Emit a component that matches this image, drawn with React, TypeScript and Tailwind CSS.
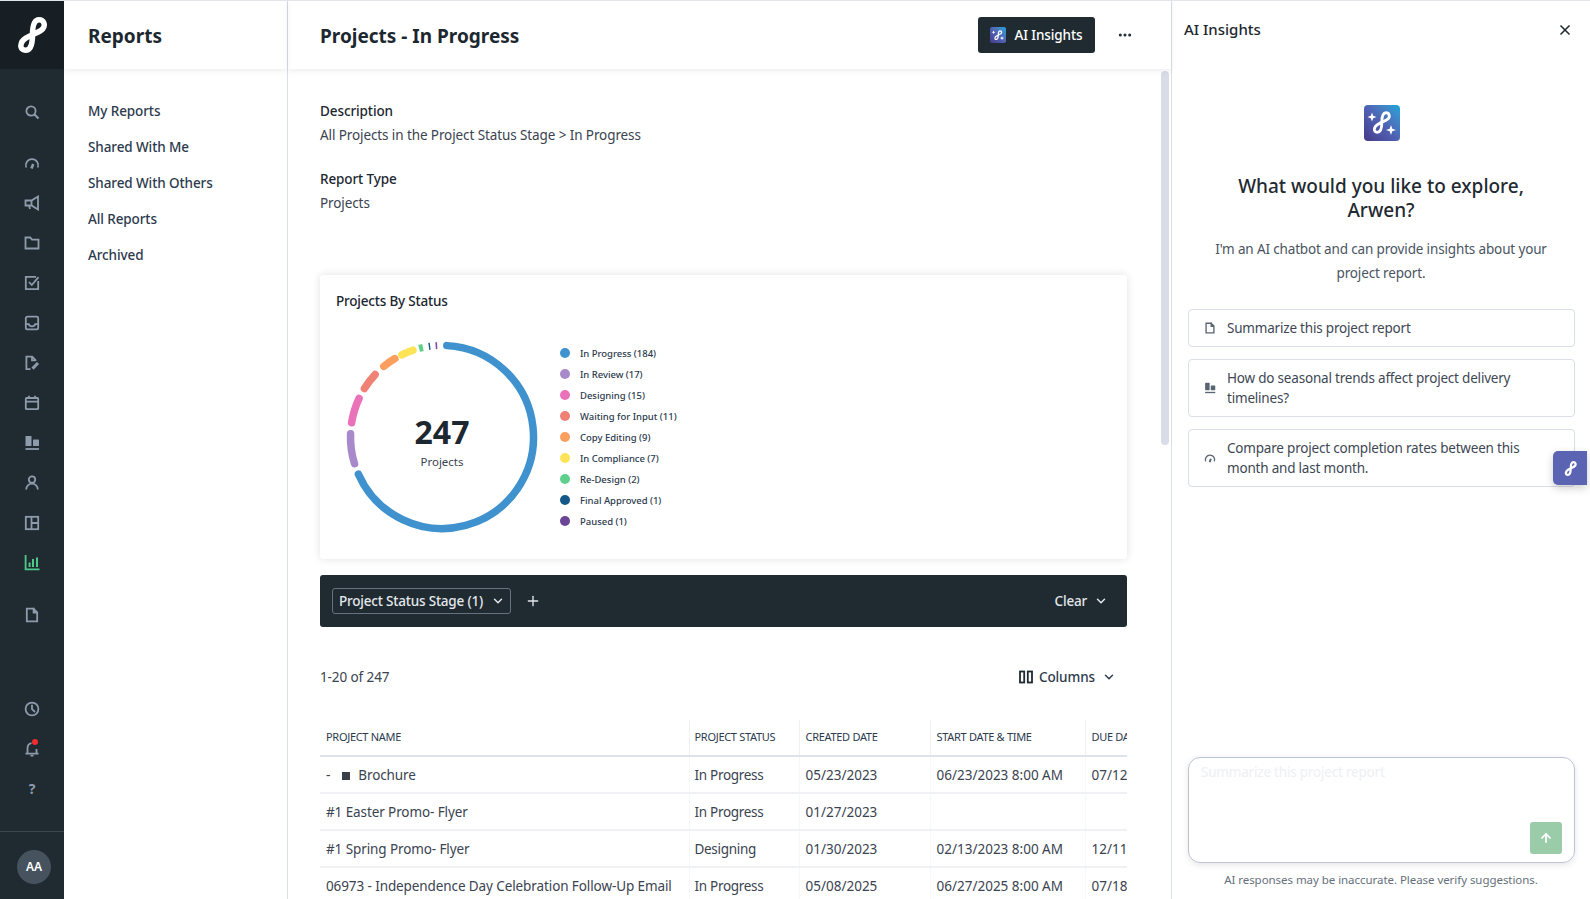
import React from "react";
import { ChevronDown, Plus, X, ArrowUp, Ellipsis } from "lucide-react";

const S = ({ children, className = "" }: { children: React.ReactNode; className?: string }) => (
  <svg viewBox="0 0 16 16" fill="none" stroke="currentColor" strokeWidth="1.8" className={className}>
    {children}
  </svg>
);

const I = {
  search: <><circle cx="7" cy="7" r="4.6" /><path d="M10.5 10.5 14.5 14.5" strokeWidth="2.2" /></>,
  gauge: <><path d="M2.2 12.5A6.2 6.2 0 1 1 13.800 12.5" /><path d="M7.5 13.5 9.200 9" strokeWidth="2.6" /></>,
  mega: <><path d="M14 1.5V14.5L7.5 10.5H1.5V5.5H7.5Z" /><path d="M5 10.5 6 14" /><path d="M7.5 5.5V10.5" /></>,
  folder: <path d="M1.5 2.5H6.2L8 4.6H14.5V13.5H1.5Z" />,
  check: <><path d="M14.2 6V14.2H1.8V1.8H12" /><path d="M5 7 7.8 10 14.5 2.2" /></>,
  inbox: <><rect x="1.8" y="1.6" width="12.4" height="12.8" rx="1.6" /><path d="M2 9.2H4.8A3.3 2.8 0 0 0 11.2 9.2H14" /></>,
  edit: <><path d="M6.5 14.2H2.4V1.6H8.2L11.5 5V6" /><path d="M8 1.6V5.4H11.5" /><path d="M8.5 13.6 14 8" strokeWidth="3" /></>,
  cal: <><rect x="1.8" y="3" width="12.4" height="11.2" rx="0.8" /><path d="M2 6.6H14M5 .8V3.6M11 .8V3.6" /></>,
  bars: <><rect x="1.5" y="1" width="6" height="10" fill="currentColor" stroke="none" rx=".6" /><rect x="9" y="4.6" width="6" height="6.4" fill="currentColor" stroke="none" rx=".6" /><path d="M1.5 14H15" /></>,
  user: <><circle cx="8" cy="4.6" r="3.2" /><path d="M2.2 14.5A5.8 5.8 0 0 1 13.8 14.5" /></>,
  table: <><rect x="1.8" y="1.8" width="12.4" height="12.4" /><path d="M7.5 2V14M7.5 8H14" /></>,
  chart: <><path d="M1.6 0V14.3H15.5" /><path d="M5.6 7.5V12M9 4V12M13 2.5V12" strokeWidth="2" /></>,
  file: <><path d="M2.8 1.6H9.4L13.2 5.4V14.4H2.8Z" /><path d="M9 1.6H9.6V5.6H13" fill="currentColor" strokeWidth="1.8" /></>,
  clock: <><circle cx="8" cy="8" r="6.4" /><path d="M8 3.8V8.2L11 11" /></>,
  bell: <><path d="M3.5 12.5V7.5C3.5 4.5 5 2.6 7.5 2.2M12.5 8V12.5M1.5 12.7H14.5" /><path d="M6.5 14.6H9.5" /></>,
};

const NavIcon = ({ children, active }: { children: React.ReactNode; active?: boolean }) => (
  <div className={"flex h-[40px] items-center justify-center " + (active ? "text-[#4fc98a]" : "text-[#8e9bab]")}>
    <S className="h-[16px] w-[16px]">{children}</S>
  </div>
);

const Infinity8 = ({ className = "", sw = 5 }: { className?: string; sw?: number }) => (
  <svg viewBox="0 0 30 36" fill="none" stroke="currentColor" strokeWidth={sw} className={className}>
    <path d="M15.500 18C15.500 10 17 2.750 22 2.750C27 2.750 28.500 8 26 11.500C23 15.500 16 16.500 9 21C3 24.500 1.500 33.250 8.500 33.250C14 33.250 15.500 25 15.500 18Z" />
  </svg>
);

const AiLogo = ({ box }: { box: string }) => (
  <div className={"relative flex items-center justify-center bg-gradient-to-bl from-[#07a6da] via-[#4f62b4] to-[#463a8a] text-white " + box}>
    <Infinity8 className="h-[64%] w-[64%]" sw={4.5} />
    <svg viewBox="0 0 36 36" className="absolute inset-0 h-full w-full" fill="currentColor">
      <path d="M8 7.500 9.200 10.800 12.500 12 9.200 13.200 8 16.500 6.800 13.200 3.500 12 6.800 10.800Z" />
      <path d="M27 20 28.300 23.700 32 25 28.300 26.300 27 30 25.700 26.300 22 25 25.700 23.700Z" />
    </svg>
  </div>
);

const polar = (a: number, r = 91.5) => {
  const t = ((a - 90) * Math.PI) / 180;
  return [100 + r * Math.cos(t), 100 + r * Math.sin(t)];
};
const arc = (a: number, b: number) => {
  const [x1, y1] = polar(a);
  const [x2, y2] = polar(b);
  return `M${x1} ${y1}A91.500 91.500 0 ${b - a > 180 ? 1 : 0} 1 ${x2} ${y2}`;
};

const segments: [number, number, string, number, "round" | "butt"][] = [
  [3, 246, "#3f92cd", 7.500, "round"],
  [253, 272, "#a88aca", 7.500, "round"],
  [279, 295, "#ea72b8", 7.500, "round"],
  [302, 313, "#ef8275", 7.500, "round"],
  [320.500, 329, "#fb9f5f", 7.500, "round"],
  [334, 341.500, "#fde356", 7.500, "round"],
  [345.500, 348, "#5fd08c", 7, "butt"],
  [351.700, 352.600, "#1d5a8c", 7, "butt"],
  [356, 357, "#7b4f9e", 7, "butt"],
];

const legend: [string, string][] = [
  ["#3f92cd", "In Progress (184)"],
  ["#a88aca", "In Review (17)"],
  ["#ea72b8", "Designing (15)"],
  ["#ef8275", "Waiting for Input (11)"],
  ["#fb9f5f", "Copy Editing (9)"],
  ["#fde356", "In Compliance (7)"],
  ["#5fd08c", "Re-Design (2)"],
  ["#14588a", "Final Approved (1)"],
  ["#6b4596", "Paused (1)"],
];

const rows: [React.ReactNode, string, string, string, string][] = [
  [<span className="flex items-center"><span>-</span><span className="ml-[12px] mr-[7px] h-[8px] w-[8px] bg-[#3a3d4a]" /><span className="ml-[1px]">Brochure</span></span>, "In Progress", "05/23/2023", "06/23/2023 8:00 AM", "07/12/2023"],
  ["#1 Easter Promo- Flyer", "In Progress", "01/27/2023", "", ""],
  ["#1 Spring Promo- Flyer", "Designing", "01/30/2023", "02/13/2023 8:00 AM", "12/11/2023"],
  ["06973 - Independence Day Celebration Follow-Up Email", "In Progress", "05/08/2025", "06/27/2025 8:00 AM", "07/18/2025"],
];

const cellClass = [
  "overflow-hidden whitespace-nowrap pl-[6px] pt-[2px]",
  "overflow-hidden whitespace-nowrap border-l border-[#f6f7f9] pl-[5px] pt-[2px] tracking-[-0.3px]",
  "overflow-hidden whitespace-nowrap border-l border-[#f6f7f9] pl-[6px] pt-[2px] tracking-normal",
  "overflow-hidden whitespace-nowrap border-l border-[#f6f7f9] pl-[6px] pt-[2px] tracking-normal",
  "overflow-hidden whitespace-nowrap border-l border-[#f6f7f9] pl-[6px] pt-[2px] tracking-normal",
];

const headClass = [
  "overflow-hidden whitespace-nowrap pl-[6px] font-normal tracking-[-0.3px]",
  "overflow-hidden whitespace-nowrap border-l border-[#f0f1f4] pl-[5px] font-normal tracking-[-0.3px]",
  "overflow-hidden whitespace-nowrap border-l border-[#f0f1f4] pl-[6px] font-normal tracking-[-0.3px]",
  "overflow-hidden whitespace-nowrap border-l border-[#f0f1f4] pl-[6px] font-normal tracking-[-0.3px]",
  "overflow-hidden whitespace-nowrap border-l border-[#f0f1f4] pl-[6px] font-normal tracking-[-0.3px]",
];

const Prompt = ({ icon, children }: { icon: React.ReactNode; children: React.ReactNode }) => (
  <div className="flex items-center rounded-[4px] border border-[#d9dee8] py-[8px] pl-[15px] pr-[20px] text-[13.5px] leading-[20px] tracking-[-0.2px] text-[#3d4754]">
    <S className="mr-[11px] h-[12px] w-[12px] shrink-0 text-[#5a6573]">{icon}</S>
    <span>{children}</span>
  </div>
);

export default function App() {
  return (
    <div className="flex h-[899px] w-[1590px] overflow-hidden border-t border-[#e2e5ea] bg-white font-['Noto_Sans',sans-serif]">
      {/* rail */}
      <aside className="flex w-[64px] shrink-0 flex-col bg-[#1f2a31]">
        <div className="flex h-[68px] shrink-0 items-center justify-center bg-[#171f24] text-white">
          <Infinity8 className="h-[36px] w-[30px]" sw={5.5} />
        </div>
        <div className="mt-[23px]"><NavIcon>{I.search}</NavIcon></div>
        <div className="mt-[11px] flex flex-col">
          <NavIcon>{I.gauge}</NavIcon>
          <NavIcon>{I.mega}</NavIcon>
          <NavIcon>{I.folder}</NavIcon>
          <NavIcon>{I.check}</NavIcon>
          <NavIcon>{I.inbox}</NavIcon>
          <NavIcon>{I.edit}</NavIcon>
          <NavIcon>{I.cal}</NavIcon>
          <NavIcon>{I.bars}</NavIcon>
          <NavIcon>{I.user}</NavIcon>
          <NavIcon>{I.table}</NavIcon>
          <NavIcon active>{I.chart}</NavIcon>
        </div>
        <div className="mt-[12px]"><NavIcon>{I.file}</NavIcon></div>
        <div className="mt-auto flex flex-col">
          <NavIcon>{I.clock}</NavIcon>
          <div className="relative flex h-[40px] items-center justify-center text-[#8e9bab]">
            <S className="h-[16px] w-[16px]">{I.bell}</S>
            <span className="absolute left-[32px] top-[10px] h-[6px] w-[6px] rounded-full bg-[#f02d2d]" />
          </div>
          <div className="flex h-[39px] items-center justify-center text-[14px] font-bold text-[#8e9bab]">?</div>
        </div>
        <div className="mt-[23px] flex h-[68px] shrink-0 items-start justify-center border-t border-[#3a4650] pt-[18px]">
          <div className="ml-[4px] flex h-[34px] w-[34px] items-center justify-center rounded-full bg-[#46525e] text-[12px] font-semibold text-white">AA</div>
        </div>
      </aside>

      {/* reports nav */}
      <nav className="flex w-[224px] shrink-0 flex-col border-r border-[#d9dee8]">
        <div className="flex h-[68px] shrink-0 items-center pl-[24px] pt-[3px] text-[19px] font-bold text-[#1c2730] shadow-[0_2px_6px_rgba(0,0,0,0.07)]">Reports</div>
        <ul className="mt-[24px] flex flex-col pl-[24px] text-[13.5px] font-medium leading-[36px] tracking-[-0.1px] text-[#2c3a4d]">
          <li>My Reports</li>
          <li>Shared With Me</li>
          <li>Shared With Others</li>
          <li>All Reports</li>
          <li>Archived</li>
        </ul>
      </nav>

      {/* main */}
      <main className="flex w-[884px] shrink-0 flex-col border-r border-[#d9dee8]">
        <header className="relative z-10 flex h-[68px] shrink-0 items-center pl-[32px] shadow-[0_2px_6px_rgba(0,0,0,0.07)]">
          <h1 className="pt-[3px] text-[19px] font-bold text-[#1c2730]">Projects - In Progress</h1>
          <button className="ml-auto flex h-[36px] w-[117px] items-center justify-center gap-[8px] rounded-[3px] bg-[#1f2a31] text-[13.5px] font-medium tracking-[-0.1px] text-white">
            <AiLogo box="h-[16px] w-[16px] rounded-[2px]" />
            AI Insights
          </button>
          <Ellipsis className="ml-[22px] mr-[38px] h-[16px] w-[16px] text-[#1f2a31]" strokeWidth={2.5} />
        </header>
        <div className="flex min-h-0 flex-1">
          <div className="w-[839px] shrink-0 pl-[32px] pt-[30px]">
            <div className="text-[13.5px] leading-[24px] tracking-[-0.1px] text-[#3a4350]">
              <div className="font-medium text-[#1c2730]">Description</div>
              <div>All Projects in the Project Status Stage &gt; In Progress</div>
              <div className="mt-[20px] font-medium text-[#1c2730]">Report Type</div>
              <div>Projects</div>
            </div>
            <section className="mt-[60px] h-[284px] rounded-[3px] bg-white pl-[16px] pt-[15px] shadow-[0_0_8px_rgba(0,0,0,0.12)]">
              <h2 className="text-[13.5px] font-medium leading-[22px] tracking-[-0.2px] text-[#1c2730]">Projects By Status</h2>
              <div className="mt-[25px] flex">
                <div className="relative ml-[6px] h-[200px] w-[200px] shrink-0">
                  <svg viewBox="0 0 200 200" className="h-full w-full" fill="none">
                    {segments.map(([a, b, c, w, cap]) => (
                      <path key={a} d={arc(a, b)} stroke={c} strokeWidth={w} strokeLinecap={cap} />
                    ))}
                  </svg>
                  <div className="absolute inset-0 flex flex-col items-center justify-center">
                    <div className="mt-[8px] text-[32px] font-bold leading-[40px] text-[#1c2730]">247</div>
                    <div className="mt-[1px] text-[11.5px] leading-[18px] text-[#3a4350]">Projects</div>
                  </div>
                </div>
                <ul className="ml-[18px] mt-[5px] flex flex-col">
                  {legend.map(([c, t]) => (
                    <li key={t} className="flex h-[21px] items-center text-[9.5px] font-medium tracking-[-0.02px] text-[#2c3a4d]">
                      <span className="mr-[10px] h-[10px] w-[10px] rounded-full" style={{ background: c }} />
                      <span className="pt-[4px]">{t}</span>
                    </li>
                  ))}
                </ul>
              </div>
            </section>
            <div className="mt-[16px] flex h-[52px] items-center rounded-[3px] bg-[#1f2a31] pl-[12px] pr-[19px] text-[13.5px] font-medium tracking-[-0.2px] text-[#e4e8ec]">
              <div className="flex h-[26px] items-center rounded-[3px] border border-[#66737e] pl-[6px] pr-[5px]">
                Project Status Stage (1)
                <ChevronDown className="ml-[8px] h-[14px] w-[14px]" strokeWidth={2.5} />
              </div>
              <Plus className="ml-[14px] h-[16px] w-[16px]" />
              <span className="ml-auto">Clear</span>
              <ChevronDown className="ml-[7px] h-[14px] w-[14px]" strokeWidth={2.5} />
            </div>
            <div className="mt-[37px] flex h-[26px] items-center text-[13.5px] tracking-[-0.1px] text-[#3a4350]">
              <span>1-20 of 247</span>
              <div className="ml-auto mr-[11px] flex items-center font-medium text-[#2c3a4d]">
                <svg viewBox="0 0 14 14" className="mr-[6px] h-[14px] w-[14px] text-[#1f2a31]" fill="none" stroke="currentColor" strokeWidth="1.8">
                  <rect x="1" y="1.500" width="4.200" height="11" />
                  <rect x="8.800" y="1.500" width="4.200" height="11" />
                </svg>
                Columns
                <ChevronDown className="ml-[7px] h-[14px] w-[14px]" strokeWidth={2.5} />
              </div>
            </div>
            <table className="mt-[30px] w-[807px] table-fixed border-collapse text-[13.5px] tracking-[-0.1px] text-[#3a4350]">
              <colgroup>
                <col className="w-[369px]" />
                <col className="w-[110px]" />
                <col className="w-[131px]" />
                <col className="w-[155px]" />
                <col className="w-[42px]" />
              </colgroup>
              <thead>
                <tr className="h-[36px] border-b-2 border-[#dfe2ea] text-left text-[11px] font-normal uppercase text-[#2c3a4d]">
                  {["Project Name", "Project Status", "Created Date", "Start Date & Time", "Due Date"].map((h, i) => (
                    <th key={h} className={headClass[i]}>{h}</th>
                  ))}
                </tr>
              </thead>
              <tbody>
                {rows.map((r, i) => (
                  <tr key={i} className="h-[37px] border-b-2 border-[#f0f1f4]">
                    {r.map((c, j) => (
                      <td key={j} className={cellClass[j]}>{c}</td>
                    ))}
                  </tr>
                ))}
              </tbody>
            </table>
          </div>
          <div className="ml-[34px] mt-[2px] h-[374px] w-[8px] rounded-full bg-[#d7dce7]" />
        </div>
      </main>

      {/* AI panel */}
      <aside className="relative flex min-w-0 flex-1 flex-col">
        <div className="flex h-[57px] shrink-0 items-center justify-between pl-[12px] pr-[17px]">
          <span className="text-[15px] font-medium text-[#1c2730]">AI Insights</span>
          <X className="h-[16px] w-[16px] text-[#1f2a31]" strokeWidth={2.5} />
        </div>
        <div className="mt-[47px] flex justify-center pl-[2px]">
          <AiLogo box="h-[36px] w-[36px] rounded-[4px]" />
        </div>
        <h3 className="mx-auto mt-[33px] w-[340px] text-center text-[19px] font-medium leading-[24px] text-[#1f2a31]">What would you like to explore, Arwen?</h3>
        <p className="mx-auto mt-[15px] w-[350px] text-center text-[13.5px] leading-[24px] tracking-[-0.15px] text-[#4a5461]">I'm an AI chatbot and can provide insights about your project report.</p>
        <div className="ml-[16px] mt-[24px] flex w-[387px] flex-col gap-[12px]">
          <Prompt icon={I.file}>Summarize this project report</Prompt>
          <Prompt icon={I.bars}>How do seasonal trends affect project delivery timelines?</Prompt>
          <Prompt icon={I.gauge}>Compare project completion rates between this month and last month.</Prompt>
        </div>
        <div className="absolute right-[3px] top-[450px] flex h-[34px] w-[34px] items-center justify-center rounded-l-[5px] bg-[#5b64b2] text-white shadow-[0_3px_8px_rgba(0,0,0,0.2)]">
          <Infinity8 className="h-[15px] w-[13px]" sw={5.5} />
        </div>
        <div className="relative ml-[16px] mt-auto h-[106px] w-[387px] rounded-[12px] border border-[#bcc5d6] pl-[12px] pt-[4px] text-[13.5px] leading-[20px] tracking-[-0.2px] text-[#eef0f4] shadow-[0_2px_6px_rgba(0,0,0,0.1)]">
          Summarize this project report
          <div className="absolute bottom-[8px] right-[12px] flex h-[32px] w-[32px] items-center justify-center rounded-[3px] bg-[#9accaa] text-white">
            <ArrowUp className="h-[14px] w-[14px]" strokeWidth={3} />
          </div>
        </div>
        <div className="mb-[10px] mt-[8px] text-center text-[11.5px] leading-[18px] tracking-[-0.05px] text-[#66707c]">AI responses may be inaccurate. Please verify suggestions.</div>
      </aside>
    </div>
  );
}
